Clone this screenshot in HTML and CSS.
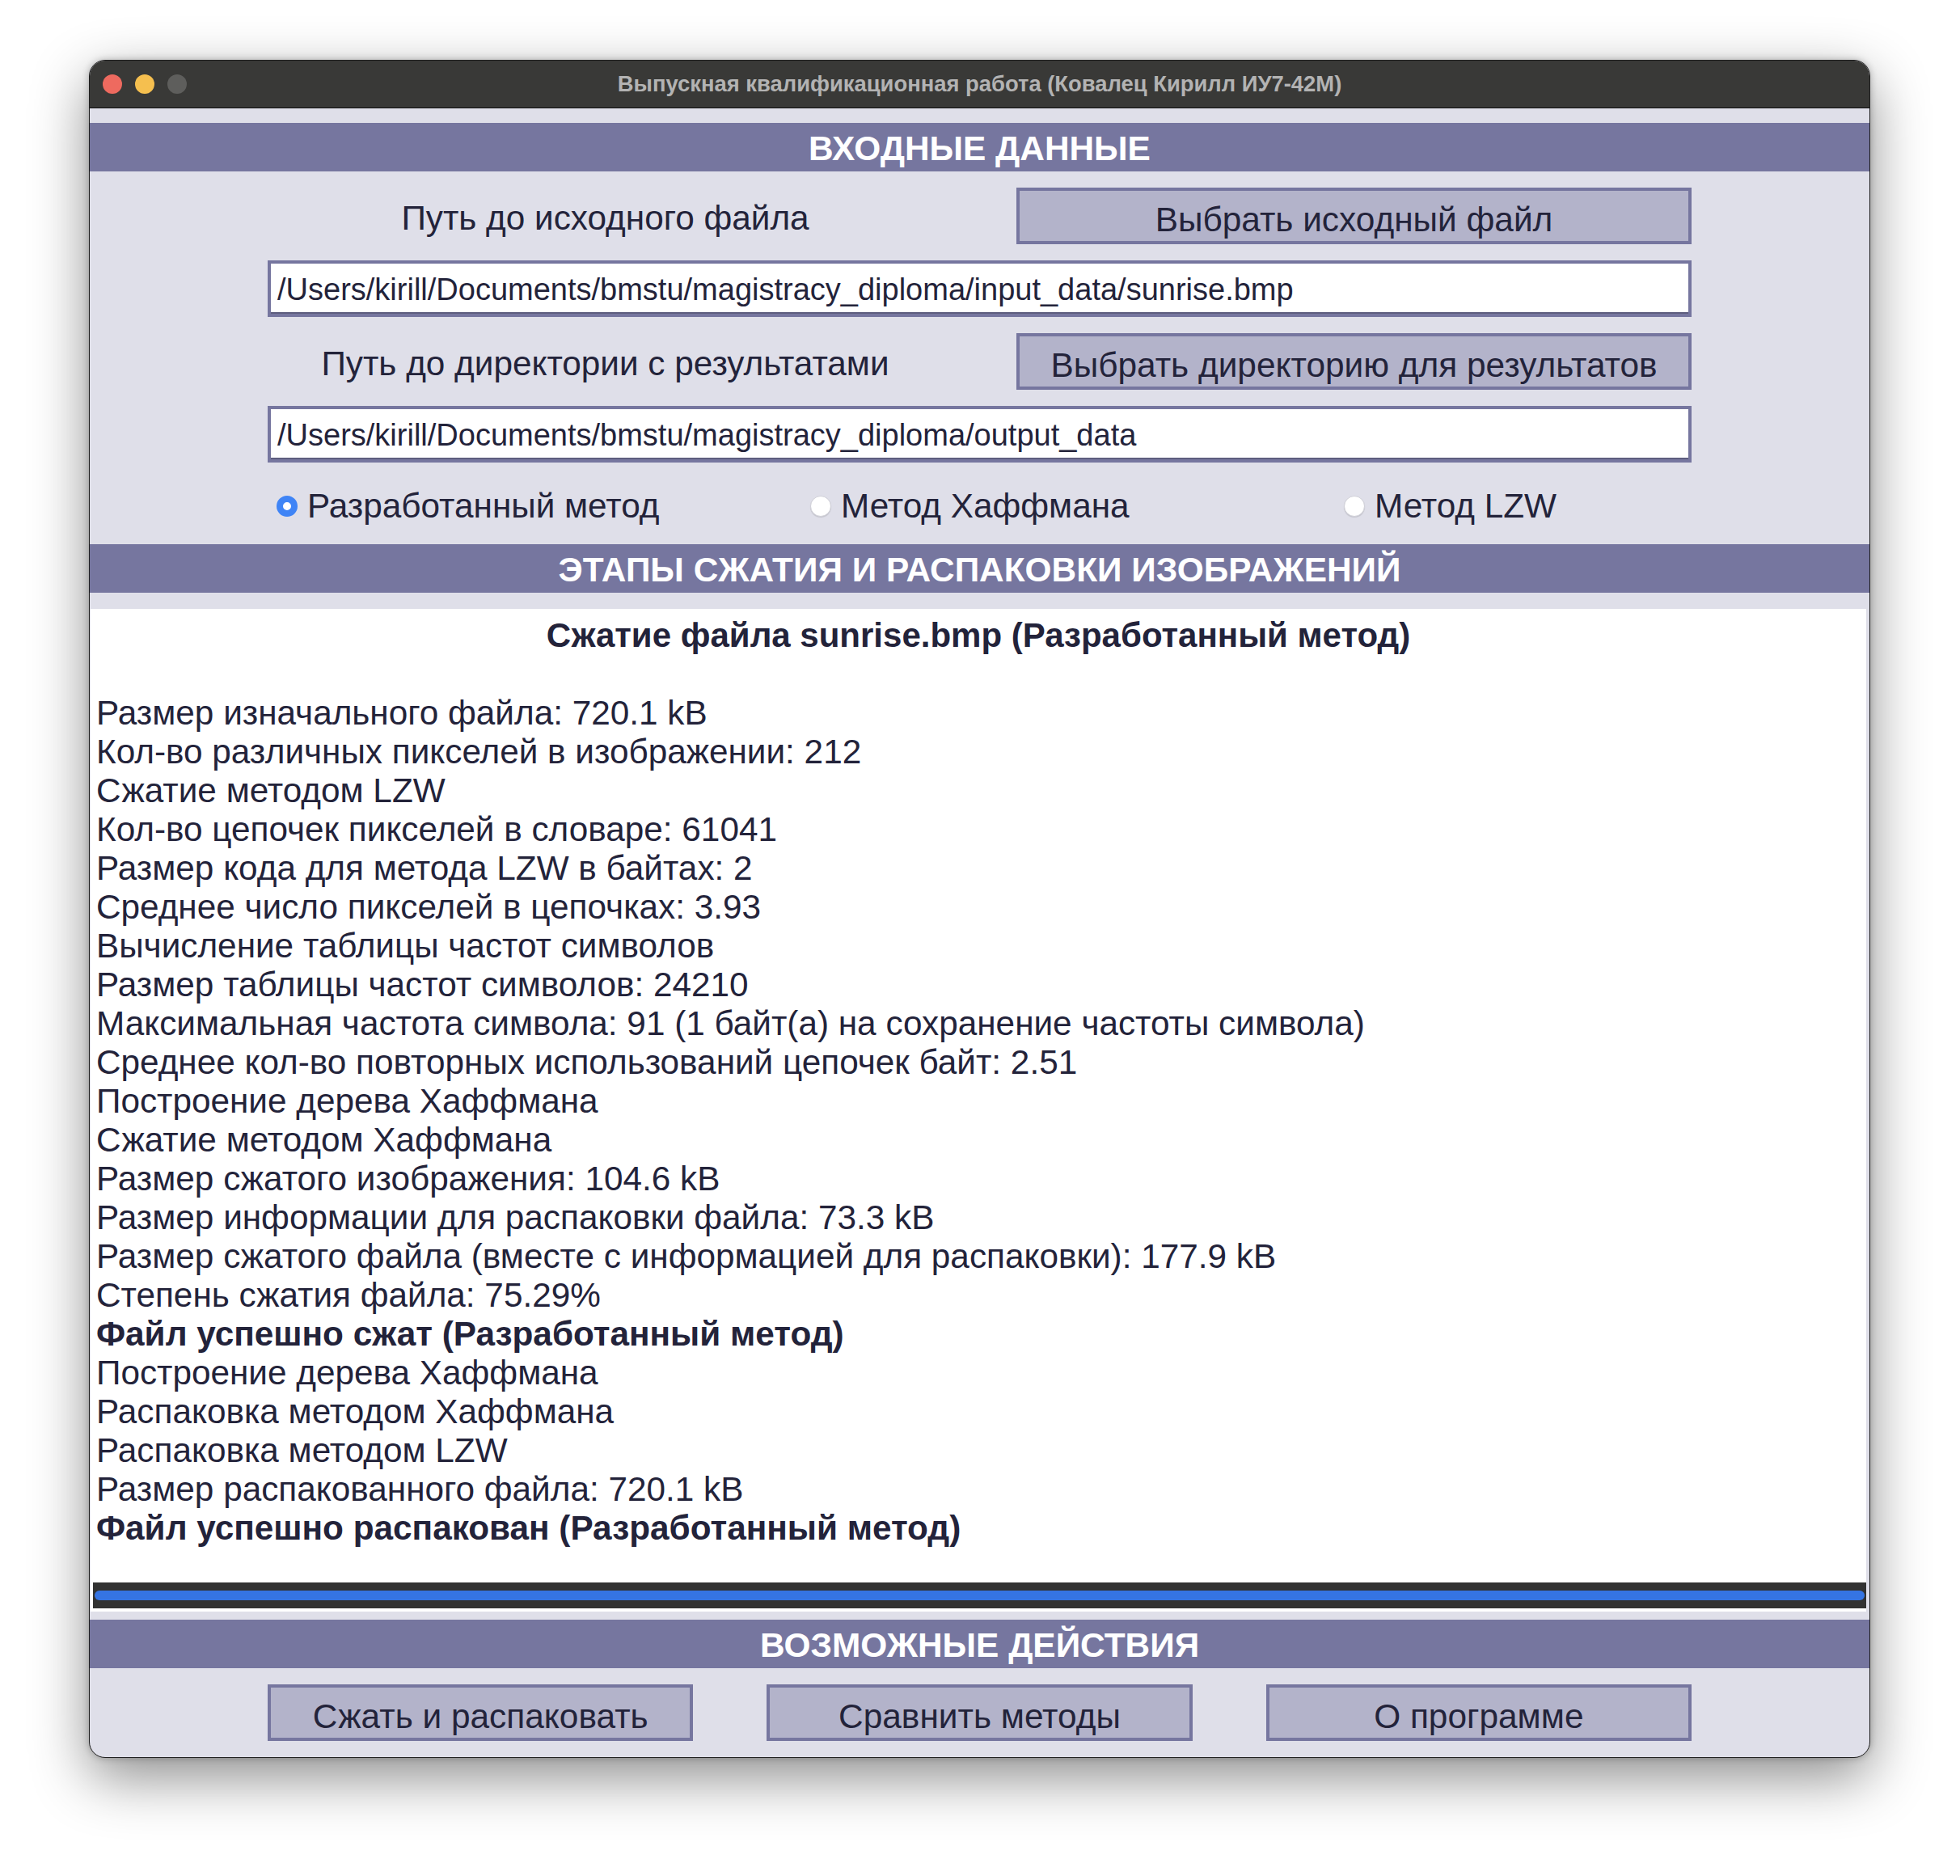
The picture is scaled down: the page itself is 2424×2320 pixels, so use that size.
FILE: index.html
```html
<!DOCTYPE html>
<html lang="ru">
<head>
<meta charset="utf-8">
<title>Выпускная квалификационная работа</title>
<link rel="stylesheet" href="styles.css">
</head>
<body>
<div class="window">
  <div class="titlebar">
    <div class="lights">
      <span class="light red"></span>
      <span class="light yellow"></span>
      <span class="light gray"></span>
    </div>
    <div class="title">Выпускная квалификационная работа (Ковалец Кирилл ИУ7-42М)</div>
  </div>
  <div class="strip strip-top"></div>
  <div class="header">ВХОДНЫЕ ДАННЫЕ</div>
  <div class="inputs">
    <div class="label">Путь до исходного файла</div>
    <div class="btn">Выбрать исходный файл</div>
    <div class="field">/Users/kirill/Documents/bmstu/magistracy_diploma/input_data/sunrise.bmp</div>
    <div class="label">Путь до директории с результатами</div>
    <div class="btn">Выбрать директорию для результатов</div>
    <div class="field">/Users/kirill/Documents/bmstu/magistracy_diploma/output_data</div>
  </div>
  <div class="radios">
    <div class="radio"><span class="dot checked"></span><span>Разработанный метод</span></div>
    <div class="radio"><span class="dot"></span><span>Метод Хаффмана</span></div>
    <div class="radio last"><span class="dot"></span><span>Метод LZW</span></div>
  </div>
  <div class="header">ЭТАПЫ СЖАТИЯ И РАСПАКОВКИ ИЗОБРАЖЕНИЙ</div>
  <div class="strip"></div>
  <div class="log">
    <div class="log-text">
      <div class="log-title">Сжатие файла sunrise.bmp (Разработанный метод)</div>
      <div class="blank"></div>
      <div>Размер изначального файла: 720.1 kB</div>
      <div>Кол-во различных пикселей в изображении: 212</div>
      <div>Сжатие методом LZW</div>
      <div>Кол-во цепочек пикселей в словаре: 61041</div>
      <div>Размер кода для метода LZW в байтах: 2</div>
      <div>Среднее число пикселей в цепочках: 3.93</div>
      <div>Вычисление таблицы частот символов</div>
      <div>Размер таблицы частот символов: 24210</div>
      <div>Максимальная частота символа: 91 (1 байт(а) на сохранение частоты символа)</div>
      <div>Среднее кол-во повторных использований цепочек байт: 2.51</div>
      <div>Построение дерева Хаффмана</div>
      <div>Сжатие методом Хаффмана</div>
      <div>Размер сжатого изображения: 104.6 kB</div>
      <div>Размер информации для распаковки файла: 73.3 kB</div>
      <div>Размер сжатого файла (вместе с информацией для распаковки): 177.9 kB</div>
      <div>Степень сжатия файла: 75.29%</div>
      <div class="bold">Файл успешно сжат (Разработанный метод)</div>
      <div>Построение дерева Хаффмана</div>
      <div>Распаковка методом Хаффмана</div>
      <div>Распаковка методом LZW</div>
      <div>Размер распакованного файла: 720.1 kB</div>
      <div class="bold">Файл успешно распакован (Разработанный метод)</div>
    </div>
    <div class="progress"><div class="progress-fill"></div></div>
  </div>
  <div class="strip strip-small"></div>
  <div class="header">ВОЗМОЖНЫЕ ДЕЙСТВИЯ</div>
  <div class="actions">
    <div class="btn">Сжать и распаковать</div>
    <div class="btn">Сравнить методы</div>
    <div class="btn">О программе</div>
  </div>
</div>
</body>
</html>
```

FILE: styles.css
```css
html, body {
  margin: 0;
  padding: 0;
  background: #ffffff;
}

body {
  width: 2424px;
  height: 2320px;
  overflow: hidden;
  font-family: "Liberation Sans", Arial, sans-serif;
  color: #23233a;
}

.window {
  margin-left: 110px;
  margin-top: 74px;
  width: 2203px;
  box-sizing: border-box;
  border: 1px solid #1e1e1e;
  border-radius: 20px;
  overflow: hidden;
  background: #dfdfe9;
  box-shadow: 0 24px 70px rgba(0, 0, 0, 0.45), 0 0 8px rgba(0, 0, 0, 0.25);
}

.titlebar {
  position: relative;
  height: 58px;
  background: #393937;
  border-bottom: 1px solid #0c0c0c;
  display: flex;
  align-items: center;
  justify-content: center;
}

.lights {
  position: absolute;
  left: 16px;
  top: 17px;
  display: flex;
  gap: 16px;
}

.light {
  width: 24px;
  height: 24px;
  border-radius: 50%;
  display: block;
}

.red { background: #ee6a5f; }
.yellow { background: #f5bf4f; }
.gray { background: #5e5e5c; }

.title {
  font-size: 27.4px;
  font-weight: bold;
  color: #b3b3b3;
}

.strip { height: 20px; }
.strip-top { height: 18px; }
.strip-small { height: 10px; }

.header {
  height: 60px;
  line-height: 64px;
  background: #76769f;
  color: #ffffff;
  font-weight: bold;
  font-size: 42.4px;
  text-align: center;
}

.inputs {
  padding: 20px 220px 0 220px;
  display: grid;
  grid-template-columns: 1fr 1fr;
  column-gap: 91px;
  row-gap: 20px;
}

.label {
  height: 70px;
  box-sizing: border-box;
  padding-top: 6px;
  display: flex;
  align-items: center;
  justify-content: center;
  font-size: 42.3px;
}

.btn {
  height: 70px;
  box-sizing: border-box;
  border: 4px solid #76769f;
  background: #b3b3ca;
  display: flex;
  align-items: center;
  justify-content: center;
  font-size: 42.4px;
  padding-top: 9px;
}

.field {
  grid-column: 1 / 3;
  height: 70px;
  box-sizing: border-box;
  border: 4px solid #76769f;
  background: #ffffff;
  box-shadow: inset 0 -2px 0 #5d5d7e;
  display: flex;
  align-items: center;
  padding: 2px 0 0 8px;
  font-size: 38px;
}

.radios {
  height: 101px;
  box-sizing: border-box;
  padding: 7px 0 0 231px;
  display: flex;
  align-items: center;
}

.radio {
  flex: none;
  width: 660px;
  display: flex;
  align-items: center;
  font-size: 42.3px;
}

.radio.last { width: 600px; }

.dot {
  width: 26px;
  height: 26px;
  border-radius: 50%;
  box-sizing: border-box;
  background: #ffffff;
  border: 1px solid #d0d0d8;
  box-shadow: 0 1px 1px rgba(0, 0, 0, 0.12);
  margin-right: 12px;
  flex: none;
}

.dot.checked {
  background: #ffffff;
  border: 8px solid #3f84f6;
  box-shadow: none;
}

.log {
  margin: 0 4px 0 1px;
  background: #ffffff;
  padding: 9px 0 4px 0;
}

.log-text {
  padding-left: 7px;
  font-size: 42.3px;
  line-height: 48px;
  height: 1195px;
}

.log-title {
  text-align: center;
  font-weight: bold;
  font-size: 42px;
  padding-right: 7px;
}

.blank { height: 48px; }

.bold { font-weight: bold; }

.progress {
  margin-left: 3px;
  height: 32px;
  box-sizing: border-box;
  background: #323232;
  padding: 10px 2px;
}

.progress-fill {
  height: 12px;
  background: #3574e3;
  border-radius: 6px;
}

.actions {
  padding: 20px 220px 20px 220px;
  display: grid;
  grid-template-columns: 1fr 1fr 1fr;
  column-gap: 91px;
}
```
